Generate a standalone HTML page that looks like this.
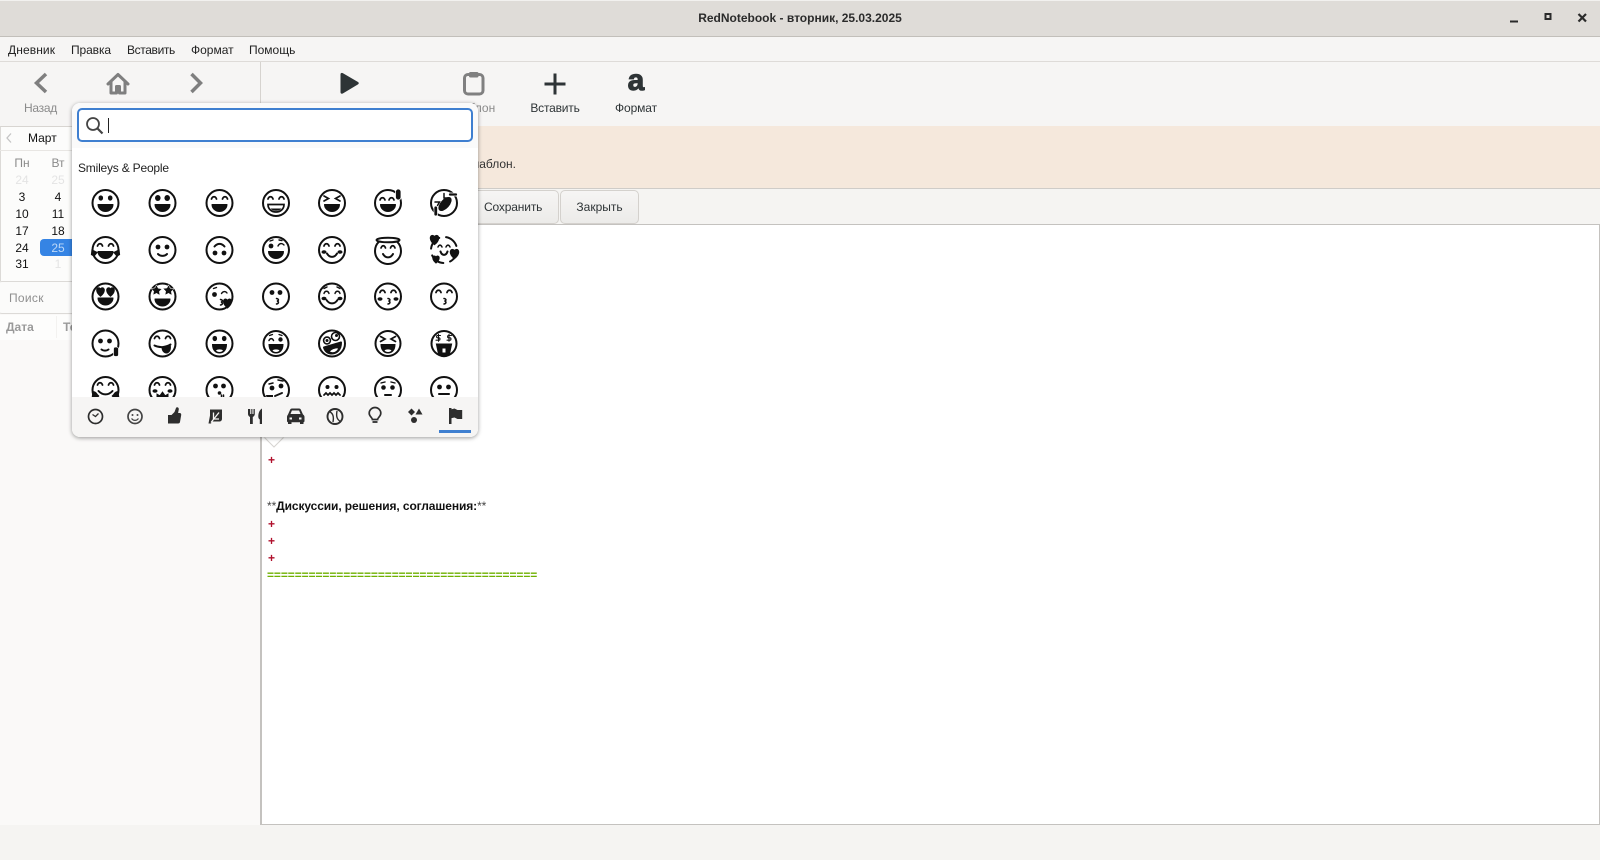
<!DOCTYPE html>
<html lang="ru"><head><meta charset="utf-8"><title>RedNotebook</title>
<style>
html,body{margin:0;padding:0}
body{width:1600px;height:860px;position:relative;overflow:hidden;background:#f5f4f2;font-family:"Liberation Sans","DejaVu Sans",sans-serif;font-size:12px;color:#2e3436}
.a{position:absolute;white-space:nowrap}
.c{transform:translateX(-50%)}
.d{position:absolute;width:30px;margin-left:-15px;text-align:center;font-size:12px;color:#111;line-height:14px}
.tb{position:absolute;left:0;top:1px;width:1600px;height:35px;background:#dfdcd8;border-bottom:1px solid #c2bfba}
.mn{position:absolute;left:0;top:37px;width:1600px;height:24px;background:#f6f5f4;border-bottom:1px solid #dedbd8}
.mn span{position:absolute;top:6px;font-size:12px;color:#222}
.tool{position:absolute;left:0;top:62px;width:1600px;height:64px;background:#f6f5f4}
.lb{position:absolute;top:101px;font-size:12px;transform:translateX(-50%);white-space:nowrap}
.btn{position:absolute;top:190px;height:32px;line-height:32px;text-align:center;font-size:12px;background:linear-gradient(#f6f5f4,#ecebe9);border:1px solid #d4d1cd;border-radius:5px;box-sizing:content-box}
.pop{position:absolute;left:72px;top:103px;width:406px;height:334px;background:#fff;border-radius:8px;box-shadow:0 1px 4px rgba(0,0,0,.4);overflow:hidden}
</style></head><body>

<div class="a" style="left:0;top:0;width:1600px;height:1px;background:#f2f1ef"></div>
<div class="tb"></div>
<div class="a c" style="left:800px;top:11px;font-weight:bold;font-size:12px;color:#2b2b2b">RedNotebook - вторник, 25.03.2025</div>
<svg class="a" style="left:1500px;top:8px" width="100" height="20" fill="none" stroke="#2b2b2b">
<path d="M10 13.500h8" stroke-width="2"/>
<rect x="45.500" y="6" width="5" height="5" stroke-width="2"/>
<path d="M78.500 6l7.500 7.500M86 6l-7.500 7.500" stroke-width="2.200"/>
</svg>

<div class="mn">
<span style="left:8px;letter-spacing:.1px">Дневник</span><span style="left:71px;letter-spacing:-.1px">Правка</span><span style="left:127px;letter-spacing:-.37px">Вставить</span><span style="left:191px">Формат</span><span style="left:249px">Помощь</span>
</div>

<div class="tool"></div>
<div class="a" style="left:260px;top:62px;width:1px;height:62px;background:#d6d3cf"></div>
<svg class="a" style="left:0;top:62px" width="680" height="40" fill="none">
<path d="M46 12L36.500 21 46 30" stroke="#7f7f7f" stroke-width="3.500"/>
<path d="M191.500 12L200.500 21 191.500 30" stroke="#7f7f7f" stroke-width="3.500"/>
<path d="M108 22L118 12.500 128 22M111 20v11h5.500v-6.500h3V31H125V20" stroke="#7f7f7f" stroke-width="3" stroke-linejoin="round" stroke-linecap="round"/>
<path d="M340.500 12.500c0-1.500 1.300-2 2.500-1.300L358 20c1 .6 1 1.800 0 2.400l-15 9c-1.200.7-2.500.2-2.500-1.300z" fill="#2e3436"/>
<rect x="464.500" y="12.500" width="18.500" height="19.500" rx="3.500" stroke="#808080" stroke-width="3"/>
<rect x="469" y="10" width="9.500" height="5.500" rx="1.500" fill="#808080"/>
<path d="M555 11.500v21M544.500 22h21" stroke="#2e3436" stroke-width="3"/>
</svg>
<div class="a c" style="left:636px;top:63px;font:bold 30px/36px 'Liberation Sans',sans-serif;color:#2e3436;-webkit-text-stroke:1px #2e3436">a</div>
<div class="lb" style="left:40.500px;color:#8a8a8a;letter-spacing:-.3px">Назад</div>
<div class="lb" style="left:473px;color:#8a8a8a">Шаблон</div>
<div class="lb" style="left:555px;letter-spacing:-.2px">Вставить</div>
<div class="lb" style="left:636px;letter-spacing:-.1px">Формат</div>

<!-- left panel -->
<div class="a" style="left:0;top:126px;width:260px;height:699px;background:#faf9f8"></div>
<div class="a" style="left:0;top:126px;width:260px;height:155px;background:#fcfcfb;border-top:1px solid #d8d5d1;border-left:1px solid #dcdad7;box-sizing:border-box"></div>
<div class="a" style="left:0;top:150px;width:260px;height:1px;background:#e8e6e3"></div>
<svg class="a" style="left:4px;top:132px" width="10" height="12" fill="none"><path d="M7 1.500L3 6l4 4.500" stroke="#c4c4c4" stroke-width="1.300"/></svg>
<div class="a" style="left:28px;top:131px;font-size:12px;color:#111">Март</div>
<div class="d" style="left:22px;top:156px;color:#8a8a8a">Пн</div><div class="d" style="left:58px;top:156px;color:#8a8a8a">Вт</div>
<div class="d" style="left:22px;top:173px;color:#e4e4e4">24</div><div class="d" style="left:58px;top:173px;color:#e4e4e4">25</div>
<div class="d" style="left:22px;top:190px">3</div><div class="d" style="left:58px;top:190px">4</div>
<div class="d" style="left:22px;top:207px">10</div><div class="d" style="left:58px;top:207px">11</div>
<div class="d" style="left:22px;top:224px">17</div><div class="d" style="left:58px;top:224px">18</div>
<div class="a" style="left:40px;top:239px;width:60px;height:17px;background:#3584e4;border-radius:4px"></div>
<div class="d" style="left:22px;top:241px">24</div><div class="d" style="left:58px;top:241px;color:#bcd8f8">25</div>
<div class="d" style="left:22px;top:257px">31</div><div class="d" style="left:58px;top:257px;color:#e4e4e4">1</div>
<div class="a" style="left:-4px;top:281px;width:264px;height:33px;background:#fbfbfa;border:1px solid #dcdad7;border-radius:6px;box-sizing:border-box"></div>
<div class="a" style="left:9px;top:291px;font-size:12px;color:#8f8f8f;letter-spacing:.3px">Поиск</div>
<div class="a" style="left:0;top:315px;width:260px;height:25px;background:#fdfdfc"></div>
<div class="a" style="left:6px;top:320px;font-size:12px;color:#9a9a9a;font-weight:bold">Дата</div>
<div class="a" style="left:63px;top:320px;font-size:12px;color:#9a9a9a;font-weight:bold">Текст</div>
<div class="a" style="left:56px;top:316px;width:1px;height:22px;background:#f3f2f0"></div>

<!-- banner -->
<div class="a" style="left:261px;top:126px;width:1339px;height:63px;background:#f5e8dc;border-bottom:1px solid #cfccc8;box-sizing:border-box"></div>
<div class="a" style="right:1084px;top:157px;font-size:12px;color:#333">Выберите шаблон.</div>

<div class="btn" style="left:400px;width:157px"><span style="position:absolute;left:83px;top:0;letter-spacing:-.15px">Сохранить</span></div>
<div class="btn" style="left:560px;width:77px">Закрыть</div>

<!-- editor -->
<div class="a" style="left:260px;top:224px;width:1340px;height:601px;background:#fff;border:1px solid #c4c2bf;border-width:1px 1px 1px 2px;box-sizing:border-box"></div>
<div class="a" style="left:268px;top:453px;color:#b0102c;font-size:12px;font-weight:bold">+</div>
<div class="a" style="left:267px;top:499px;font-size:12px;color:#111;letter-spacing:-.1px"><span style="color:#444">**</span><b>Дискуссии, решения, соглашения:</b><span style="color:#444">**</span></div>
<div class="a" style="left:268px;top:517px;color:#b0102c;font-size:12px;font-weight:bold">+</div>
<div class="a" style="left:268px;top:534px;color:#b0102c;font-size:12px;font-weight:bold">+</div>
<div class="a" style="left:268px;top:551px;color:#b0102c;font-size:12px;font-weight:bold">+</div>
<div class="a" style="left:267px;top:568px;color:#6fb000;font-size:12px;font-weight:bold;letter-spacing:-.08px">=======================================</div>

<!-- popover -->
<svg class="a" style="left:258px;top:436px" width="32" height="13"><path d="M6 1L16 11 26 1" fill="#fff" stroke="#d6d4d1"/><path d="M5 0h22v1.500H5z" fill="#fff"/></svg>
<div class="pop">
<div class="a" style="left:0;top:0;width:406px;height:45px;background:#fafafa"></div>
<div class="a" style="left:5px;top:5px;width:396px;height:34px;background:#fff;border:2px solid #3f7fd0;border-radius:5px;box-sizing:border-box"></div>
<svg class="a" style="left:12px;top:12px" width="22" height="22" fill="none" stroke="#444"><circle cx="9" cy="9" r="6" stroke-width="1.800"/><path d="M13.500 13.500l5 5" stroke-width="2.200"/></svg>
<div class="a" style="left:36px;top:15px;width:1px;height:15px;background:#222"></div>
<div class="a" style="left:6px;top:58px;font-size:12px;color:#222;letter-spacing:-.2px">Smileys &amp; People</div>

<svg class="a" style="left:0;top:0" width="406" height="334" viewBox="72 103 406 334" fill="none" stroke="#111" stroke-width="2" stroke-linecap="round">
<defs>
<g id="f"><circle r="13" fill="#fff"/></g>
<path id="m" d="M-7.500 1.500H7.500C7.500 5.500 4 8.500 0 8.500S-7.500 5.500-7.500 1.500z" fill="#111" stroke="#111" stroke-width="1" stroke-linejoin="round"/>
<g id="ae"><path d="M-8-4c1-3 4-3 5 0M3-4c1-3 4-3 5 0" stroke-width="1.800"/></g>
<g id="de"><ellipse cx="-4.700" cy="-5" rx="2.300" ry="2.600" fill="#111" stroke="none"/><ellipse cx="4.700" cy="-5" rx="2.300" ry="2.600" fill="#111" stroke="none"/></g>
<path id="hrt" d="M0 4C-5 0-4-4-1.800-4-.8-4 0-3 0-2.500 0-3 .8-4 1.800-4 4-4 5 0 0 4z" fill="#111" stroke="#111" stroke-width="1"/>
<path id="kis" d="M0 2c2.500.5 2.500 2 .5 2.500C2.500 5 2.500 7 0 7.500" stroke-width="1.500"/>
</defs>

<!-- row 1 -->
<g transform="translate(105.500 203)"><use href="#f"/><use href="#de"/><use href="#m"/></g>
<g transform="translate(162.500 203)"><use href="#f"/><ellipse cx="-4.700" cy="-5" rx="2.800" ry="3" fill="#111" stroke="none"/><ellipse cx="4.700" cy="-5" rx="2.800" ry="3" fill="#111" stroke="none"/><use href="#m"/></g>
<g transform="translate(219.500 203)"><use href="#f"/><use href="#ae"/><use href="#m"/></g>
<g transform="translate(276 203)"><use href="#f"/><use href="#ae"/><path d="M-8 1.500H8C8 6 4.500 9 0 9S-8 6-8 1.500z" fill="#fff" stroke-width="1.700"/><path d="M-5.500 5.500C-3 8.500 3 8.500 5.500 5.500z" fill="#111" stroke="none"/></g>
<g transform="translate(332 203)"><use href="#f"/><path d="M-8-7l4.500 2.500L-8-2M8-7L3.500-4.500 8-2" stroke-width="1.700"/><use href="#m"/></g>
<g transform="translate(388 203)"><use href="#f"/><path d="M-8-3c1-3 4-3 5 0M1-3c1-3 4-3 5 0" stroke-width="1.700"/><use href="#m"/><rect x="7.500" y="-14" width="5.500" height="11" rx="2.700" fill="#111" stroke="#fff" stroke-width=".8"/></g>
<g transform="translate(444 203)"><use href="#f"/><ellipse cx="1" cy="1" rx="8.500" ry="4.500" transform="rotate(-48 1 1)" fill="#111" stroke="none"/><path d="M0-9.500v4.500h4" stroke-width="1.500"/><path d="M-9-1h4.500l-2 3.500" stroke-width="1.500"/><rect x="4.500" y="-10" width="9" height="3" rx="1.500" fill="#111" stroke="#fff" stroke-width=".7"/><rect x="-10" y="3" width="3.500" height="10" rx="1.700" fill="#111" stroke="#fff" stroke-width=".7"/></g>

<!-- row 2 -->
<g transform="translate(105.500 250)"><use href="#f"/><use href="#ae"/><use href="#m"/><path d="M-13.500 0l-.5 4.500 2.500 1.500 3-3.500zM13.500 0l.5 4.500-2.500 1.500-3-3.500z" fill="#111" stroke="#111" stroke-width="1.200"/></g>
<g transform="translate(162.500 250)"><use href="#f"/><circle cx="-4.500" cy="-3" r="2.400" fill="#111" stroke="none"/><circle cx="4.500" cy="-3" r="2.400" fill="#111" stroke="none"/><path d="M-4.500 4C-2 6.500 2 6.500 4.500 4"/></g>
<g transform="translate(219.500 250)"><use href="#f"/><circle cx="-4.500" cy="3" r="2.400" fill="#111" stroke="none"/><circle cx="4.500" cy="3" r="2.400" fill="#111" stroke="none"/><path d="M-5-3.500C-2-7 2-7 5-3.500"/></g>
<g transform="translate(276 250)"><use href="#f"/><circle cx="-5" cy="-4" r="2.400" fill="#111" stroke="none"/><path d="M2-4c1.500-3 4-3 6-1M-6-9l3-1M3-10l3 .5" stroke-width="1.400"/><use href="#m"/></g>
<g transform="translate(332 250)"><use href="#f"/><use href="#ae"/><ellipse cx="-8" cy="2" rx="2.500" ry="1.800" fill="#111" stroke="none"/><ellipse cx="8" cy="2" rx="2.500" ry="1.800" fill="#111" stroke="none"/><path d="M-5 3.500C-2.500 8 2.500 8 5 3.500"/></g>
<g transform="translate(388 251)"><use href="#f"/><ellipse cy="-11" rx="11.500" ry="2.300" fill="#fff" stroke-width="2"/><path d="M-7-3c1-3 3.500-3 4.500 0M2.500-3c1-3 3.500-3 4.500 0" stroke-width="1.700"/><path d="M-5 3C-2.500 7.500 2.500 7.500 5 3"/></g>
<g transform="translate(444 250)"><circle r="13" fill="#fff" stroke-dasharray="14 7"/><path d="M-6-3c1-2.500 3-2.500 4 0M2-3c1-2.500 3-2.500 4 0" stroke-width="1.500"/><path d="M-3.500 1.500C-2 6 2 6 3.500 1.500"/><use href="#hrt" transform="translate(-9.500 -10) scale(1.150)"/><use href="#hrt" transform="translate(10.500 4) scale(1.150)"/><use href="#hrt" transform="translate(-8 9.500) scale(.9)"/></g>

<!-- row 3 -->
<g transform="translate(105.500 296.500)"><use href="#f"/><use href="#hrt" transform="translate(-5 -4.500) scale(1.050)"/><use href="#hrt" transform="translate(5 -4.500) scale(1.050)"/><use href="#m"/></g>
<g transform="translate(162.500 296.500)"><use href="#f"/><path d="M-6-11.500l1.700 3.300 3.800.5-2.700 2.700.6 3.800L-6-3.200-9.400-1.500l.6-3.800-2.700-2.700 3.800-.5zM6-11.500l1.700 3.300 3.800.5-2.700 2.700.6 3.800L6-3.200 2.600-1.500l.6-3.800-2.700-2.700 3.800-.5z" fill="#111" stroke="#fff" stroke-width=".5"/><use href="#m" transform="translate(0 1)"/></g>
<g transform="translate(219.500 296.500)"><use href="#f"/><circle cx="-5" cy="-2" r="2.400" fill="#111" stroke="none"/><path d="M2-3c1.500-2.500 4-2.500 5.500-.5M-6-8l3-1" stroke-width="1.400"/><use href="#kis" transform="translate(1 1)"/><use href="#hrt" transform="translate(8 7) scale(1.100)"/></g>
<g transform="translate(276 296.500)"><use href="#f"/><circle cx="-4" cy="-4" r="2.400" fill="#111" stroke="none"/><circle cx="4" cy="-4" r="2.400" fill="#111" stroke="none"/><use href="#kis" transform="translate(.5 0)"/></g>
<g transform="translate(332 296.500)"><use href="#f"/><path d="M-8-3c1-3 4-3 5 0M3-3c1-3 4-3 5 0M-8-8l3-1.500M8-8l-3-1.500" stroke-width="1.400"/><ellipse cx="-8" cy="2" rx="2.500" ry="1.700" fill="#111" stroke="none"/><ellipse cx="8" cy="2" rx="2.500" ry="1.700" fill="#111" stroke="none"/><path d="M-5.500 3.500C-2.500 8 2.500 8 5.500 3.500"/></g>
<g transform="translate(388 296.500)"><use href="#f"/><use href="#ae"/><ellipse cx="-8" cy="2.500" rx="2.500" ry="1.700" fill="#111" stroke="none"/><ellipse cx="8" cy="2.500" rx="2.500" ry="1.700" fill="#111" stroke="none"/><use href="#kis"/></g>
<g transform="translate(444 296.500)"><use href="#f"/><use href="#ae"/><use href="#kis"/></g>

<!-- row 4 -->
<g transform="translate(105.500 343.500)"><use href="#f"/><circle cx="-5" cy="-2.500" r="2.400" fill="#111" stroke="none"/><circle cx="4" cy="-2.500" r="2.400" fill="#111" stroke="none"/><path d="M-4 6C-2 7.500 1 7.500 3 6"/><rect x="8" y="3.500" width="5" height="9.500" rx="2" fill="#111" stroke="#fff" stroke-width=".7"/></g>
<g transform="translate(162.500 343.500)"><use href="#f"/><use href="#ae" transform="translate(0 -1)"/><path d="M-8 2C-3 4.500 3 4 8 1" stroke-width="2"/><path d="M-1 3.700L8 1c1.500 5-1 9-4 9S-1 7-1 3.700z" fill="#111" stroke="none"/></g>
<g transform="translate(219.500 343.500)"><use href="#f"/><use href="#de"/><path d="M-7 1H7C7 7 3.500 9.500 0 9.500S-7 7-7 1z" fill="#111" stroke="#111" stroke-width="1"/><path d="M-3.500 7C-2 5.500 2 5.500 3.500 7 2 9-2 9-3.500 7z" fill="#fff" stroke="none"/></g>
<g transform="translate(276 343.500)"><circle r="12.500" fill="#fff"/><path d="M-7-3c1-2.500 3.500-2.500 4.500 0" stroke-width="1.500"/><circle cx="4.500" cy="-4" r="2.200" fill="#111" stroke="none"/><path d="M-6.500-8l3-1M3-9l3 1" stroke-width="1.300"/><path d="M-7 1H7C7 7 3.500 9.500 0 9.500S-7 7-7 1z" fill="#111" stroke="#111" stroke-width="1"/><path d="M-3.500 7C-2 5.500 2 5.500 3.500 7 2 9-2 9-3.500 7z" fill="#fff" stroke="none"/></g>
<g transform="translate(332 343.500)"><use href="#f"/><circle cx="-5" cy="-3" r="3.400" stroke-width="1.600"/><circle cx="3.500" cy="-7" r="4" stroke-width="1.600"/><circle cx="-5" cy="-3" r="1.500" fill="#111" stroke="none"/><circle cx="4.500" cy="-8" r="1.500" fill="#111" stroke="none"/><path d="M-8 4L9-1C9 6 5 10 0 10S-7 7-8 4z" fill="#111" stroke="#111" stroke-linejoin="round"/><path d="M-2 8C0 5.500 4 4.500 6 5 5 8 1 9.800-2 8z" fill="#fff" stroke="none"/></g>
<g transform="translate(388 343.500)"><circle r="12.500" fill="#fff"/><path d="M-7.500-7l4.500 2.500L-7.500-2M7.500-7L3-4.500 7.500-2" stroke-width="1.700"/><path d="M-7 1H7C7 7 3.500 9.500 0 9.500S-7 7-7 1z" fill="#111" stroke="#111" stroke-width="1"/><path d="M-3.500 7C-2 5.500 2 5.500 3.500 7 2 9-2 9-3.500 7z" fill="#fff" stroke="none"/></g>
<g transform="translate(444 343.500)"><circle r="12.500" fill="#fff"/><path d="M-3.500-8h-3c-1.200 0-1.200 2.300 0 2.300h1.500c1.300 0 1.300 2.400 0 2.400H-8M-5.500-9.200v7M7.500-8h-3c-1.200 0-1.200 2.300 0 2.300H6c1.300 0 1.300 2.400 0 2.400H3M5-9.200v7" stroke-width="1.100"/><path d="M-7 1H7L5 10.500c-2 3-8 3-10 0z" fill="#111" stroke="#111"/><path d="M-1.500 5H1.500V9H-1.500z" fill="#fff" stroke="none"/></g>

<!-- row 5 -->
<g transform="translate(105.500 390)"><use href="#f"/><use href="#ae" transform="translate(0 -1)"/><path d="M-7 1C-3 5.500 3 5.500 7 1" stroke-width="2"/><path d="M-13 1c2 0 4 1 5 3l2 2-3 3h-5zM13 1c-2 0-4 1-5 3l-2 2 3 3h5z" fill="#111" stroke="none"/></g>
<g transform="translate(162.500 390)"><use href="#f"/><use href="#ae" transform="translate(0 -1)"/><ellipse cx="-7.500" cy="1" rx="2.500" ry="1.800" fill="#111" stroke="none"/><ellipse cx="7.500" cy="1" rx="2.500" ry="1.800" fill="#111" stroke="none"/><path d="M-5 10V5l2.500 1.500L0 3l2.500 3.500L5 5v5z" fill="#111" stroke="#111"/></g>
<g transform="translate(219.500 390)"><use href="#f"/><circle cx="-4" cy="-4" r="2.400" fill="#111" stroke="none"/><circle cx="4" cy="-4" r="2.400" fill="#111" stroke="none"/><circle cx="0" cy="3" r="1.800" fill="#111" stroke="none"/><path d="M2 5v5M4 5v5" stroke-width="1.500"/></g>
<g transform="translate(276 390)"><use href="#f"/><path d="M-7-6L-3-7M2-10l5 1" stroke-width="1.500"/><circle cx="-4" cy="-2" r="2.400" fill="#111" stroke="none"/><circle cx="5" cy="-4" r="2.400" fill="#111" stroke="none"/><path d="M-1 6L6 3" stroke-width="1.900"/><path d="M-10 5h7v5h-6z" fill="#111" stroke="none"/></g>
<g transform="translate(332 390)"><use href="#f"/><circle cx="-4.500" cy="-3" r="2" fill="#111" stroke="none"/><circle cx="4.500" cy="-3" r="2" fill="#111" stroke="none"/><path d="M-8 5l2-2 2 2 2-2 2 2 2-2 2 2 2-2 2 2" stroke-width="1.800"/></g>
<g transform="translate(388 390)"><use href="#f"/><path d="M-7-7l4-1M3-8l4 1" stroke-width="1.400"/><circle cx="-4.500" cy="-2.500" r="2.300" fill="#111" stroke="none"/><circle cx="4.500" cy="-2.500" r="2.300" fill="#111" stroke="none"/><path d="M-3 5h6"/></g>
<g transform="translate(444 390)"><use href="#f"/><circle cx="-4.500" cy="-3" r="2.400" fill="#111" stroke="none"/><circle cx="4.500" cy="-3" r="2.400" fill="#111" stroke="none"/><path d="M-5 4h10"/></g>
</svg>

<div class="a" style="left:0;top:294px;width:406px;height:40px;background:#f6f5f4"></div>
<div class="a" style="left:367px;top:327px;width:32px;height:3px;background:#3f7fd0"></div>
<svg class="a" style="left:0;top:294px" width="406" height="40" viewBox="72 397 406 40" fill="none" stroke="#2e2e2e" stroke-width="1.700">
<g transform="translate(95.500 416.500)"><circle r="7"/><path d="M-3-2L0 0 3-3" stroke-width="1.300"/></g>
<g transform="translate(135 416.500)"><circle r="7" stroke="#444"/><circle cx="-2.500" cy="-1.500" r="1" fill="#444" stroke="none"/><circle cx="2.500" cy="-1.500" r="1" fill="#444" stroke="none"/><path d="M-3.500 2C-1.500 4.500 1.500 4.500 3.500 2" stroke-width="1.200" stroke="#444"/></g>
<path d="M168 415h3.500l3-3 1.500-4c.5-1.500 3-.8 2.800 1.200l-.7 3.800h1.500c1.200 0 1.800 1 1.600 2l-1.200 7c-.2 1-.8 1.500-2 1.500H168z" fill="#2e2e2e" stroke="none"/>
<g transform="translate(215 416.500)"><path d="M-5-7H7V2c0 2-1 3-3 3H-3L-4 7-6.500 7-5-1z" fill="#2e2e2e" stroke="none"/><path d="M-4 6L4-4M-1.500 2.500H4M-1.500 2.500V-4" stroke="#f6f5f4" stroke-width="1.300"/></g>
<path d="M248 409v5c0 1.500 1 2.500 2 3v7h2.800v-7c1-.5 2-1.500 2-3v-5h-1.300v5h-1.100v-5h-1.100v5h-1.100v-5zM262 408.500c-2.500 1.500-3.700 4.500-3.700 8 0 1.500.5 2.500 1.500 3v4.500H262z" fill="#2e2e2e" stroke="none"/>
<path d="M288 414.500l2-4.500c.3-1 1-1.500 2-1.500h7c1 0 1.700.5 2 1.500l2 4.500c1 .5 1.500 1.500 1.500 2.500v4c0 .8-.5 1.200-1 1.200v1.800h-3.500v-1.800H291.500v1.800H288v-1.800c-.5 0-1-.4-1-1.200v-4c0-1 .5-2 1-2.500zM290.500 414h10l-1.400-3.500h-7.200zM289.500 417.500v2h2.500v-2zM299 417.500v2h2.500v-2z" fill="#2e2e2e" fill-rule="evenodd" stroke="none"/>
<g transform="translate(335 416.500)"><circle r="7.500" stroke-width="1.900"/><path d="M-5.500-5C-2-3-1 0-2 5.500M5.500 5C2 3 1 0 2-5.500" stroke-width="1.400"/></g>
<g transform="translate(375 414.500)"><path d="M-2.600 5C-2.600 3-5.800 2-5.800-1.200a5.800 5.800 0 0 1 11.600 0C5.800 2 2.600 3 2.600 5z" stroke-width="1.700"/><path d="M-2.500 7.500H2.500" stroke-width="1.800"/></g>
<g fill="#2e2e2e" stroke="none"><path d="M411.500 408.500l3.500 3.500-3.500 3.500-3.500-3.500z"/><path d="M419 408.500l3.500 6h-7z"/><circle cx="414" cy="420" r="3"/></g>
<path d="M449 408h2.500v1.200l3-.7 3 1.500h4.700v9h-4.700l-3-1.500-3 .6V424H449z" fill="#2e2e2e" stroke="none"/>
</svg>
</div>
</body></html>
